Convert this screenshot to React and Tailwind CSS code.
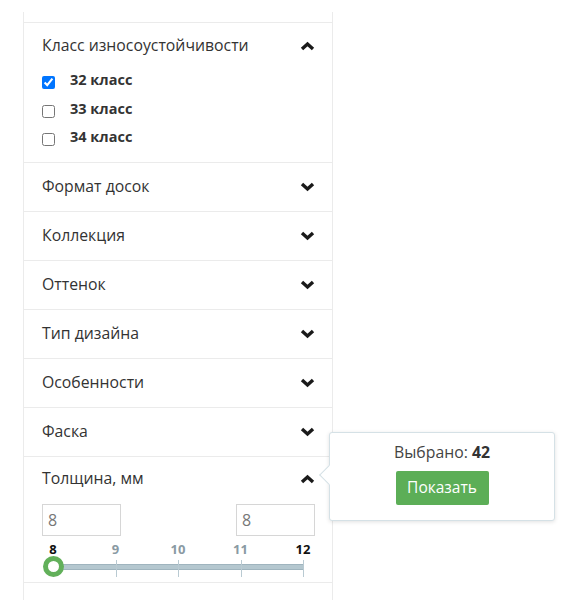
import React from "react";

function Chevron({ up }) {
  return (
    <svg width="15" height="10" viewBox="0 0 15 10" className="shrink-0">
      <polyline
        points={up ? "2,8 7.5,3 13,8" : "2,2 7.5,7 13,2"}
        fill="none"
        stroke="#1a1a1a"
        strokeWidth="3.4"
        strokeLinejoin="miter"
        strokeLinecap="butt"
      />
    </svg>
  );
}

function Collapsed({ title }) {
  return (
    <div className="border-t border-[#ebebeb]">
      <div className="h-[48px] flex items-center justify-between pl-[18px] pr-[17px]">
        <span className="text-[15.8px] text-[#333]">{title}</span>
        <Chevron />
      </div>
    </div>
  );
}

const classes = [
  { label: "32 класс", checked: true },
  { label: "33 класс", checked: false },
  { label: "34 класс", checked: false },
];

const ticks = ["8", "9", "10", "11", "12"];

export default function App() {
  return (
    <div className="relative w-[576px] h-[600px] overflow-hidden bg-white font-['Open_Sans',sans-serif]">
      <div className="ml-[23px] mt-[12px] w-[310px] border-x border-[#ebebeb]">
        <div className="h-[10px]" />

        <div className="border-t border-[#ebebeb]">
          <div className="h-[43px] pt-[3px] flex items-center justify-between pl-[18px] pr-[17px]">
            <span className="text-[15.8px] text-[#333]">Класс износоустойчивости</span>
            <Chevron up />
          </div>
          <div className="pl-[18px] pb-[10px]">
            {classes.map((c) => (
              <label key={c.label} className="h-[28.5px] flex items-center gap-[15px]">
                <input
                  type="checkbox"
                  defaultChecked={c.checked}
                  className="m-0 mt-[5px] w-[13px] h-[13px]"
                />
                <span className="text-[14.5px] font-bold text-[#333]">{c.label}</span>
              </label>
            ))}
          </div>
        </div>

        <Collapsed title="Формат досок" />
        <Collapsed title="Коллекция" />
        <Collapsed title="Оттенок" />
        <Collapsed title="Тип дизайна" />
        <Collapsed title="Особенности" />
        <Collapsed title="Фаска" />

        <div className="border-t border-[#ebebeb]">
          <div className="h-[44px] flex items-center justify-between pl-[18px] pr-[17px]">
            <span className="text-[15.8px] text-[#333]">Толщина, мм</span>
            <Chevron up />
          </div>
          <div className="pl-[18px] pr-[17px] pt-[3px] pb-[2px]">
            <div className="flex justify-between">
              <div className="w-[79px] h-[32px] border border-[#d6d6d6] flex items-center pl-[5px] text-[16px] text-[#777]">8</div>
              <div className="w-[79px] h-[32px] border border-[#d6d6d6] flex items-center pl-[5px] text-[16px] text-[#777]">8</div>
            </div>
            <div className="relative h-[40px] mt-[4px]">
              {ticks.map((t, i) => (
                <span
                  key={t}
                  className={
                    "absolute top-0 -translate-x-1/2 text-[13px] font-bold leading-[18px] " +
                    (i === 0 || i === 4 ? "text-[#111]" : "text-[#8a9aa3]")
                  }
                  style={{ left: 11 + i * 62.5 }}
                >
                  {t}
                </span>
              ))}
              <div className="absolute left-[11px] w-[251px] top-[24px] h-[6px] bg-[#b4c7cf] border border-[#9fb4be] rounded-[1px]" />
              {[1, 2, 3, 4].map((i) => (
                <div
                  key={i}
                  className="absolute top-[20px] h-[17px] w-[1px] bg-[#b9cad2]"
                  style={{ left: 11 + i * 62.5 }}
                />
              ))}
              <div className="absolute left-[1px] top-[16px] w-[21px] h-[21px] rounded-full border-[5px] border-[#62b05a] bg-white" />
            </div>
          </div>
        </div>

        <div className="border-t border-[#ebebeb] h-[20px]" />
      </div>

      <div className="absolute left-[329px] top-[432px] w-[226px] h-[89px] bg-white border border-[#d5e1e6] rounded-[3px] shadow-[0_1px_4px_rgba(0,0,0,0.12)] flex flex-col items-center">
        <div className="absolute left-[-8px] top-[35px] w-[14px] h-[14px] bg-white border-l border-b border-[#d5e1e6] rotate-45" />
        <div className="mt-[8px] text-[15.8px] text-[#444]">
          Выбрано: <b className="text-[#333]">42</b>
        </div>
        <button className="mt-[6px] w-[93px] h-[34px] bg-[#5cae57] rounded-[2px] text-white text-[15.5px]">
          Показать
        </button>
      </div>
    </div>
  );
}
